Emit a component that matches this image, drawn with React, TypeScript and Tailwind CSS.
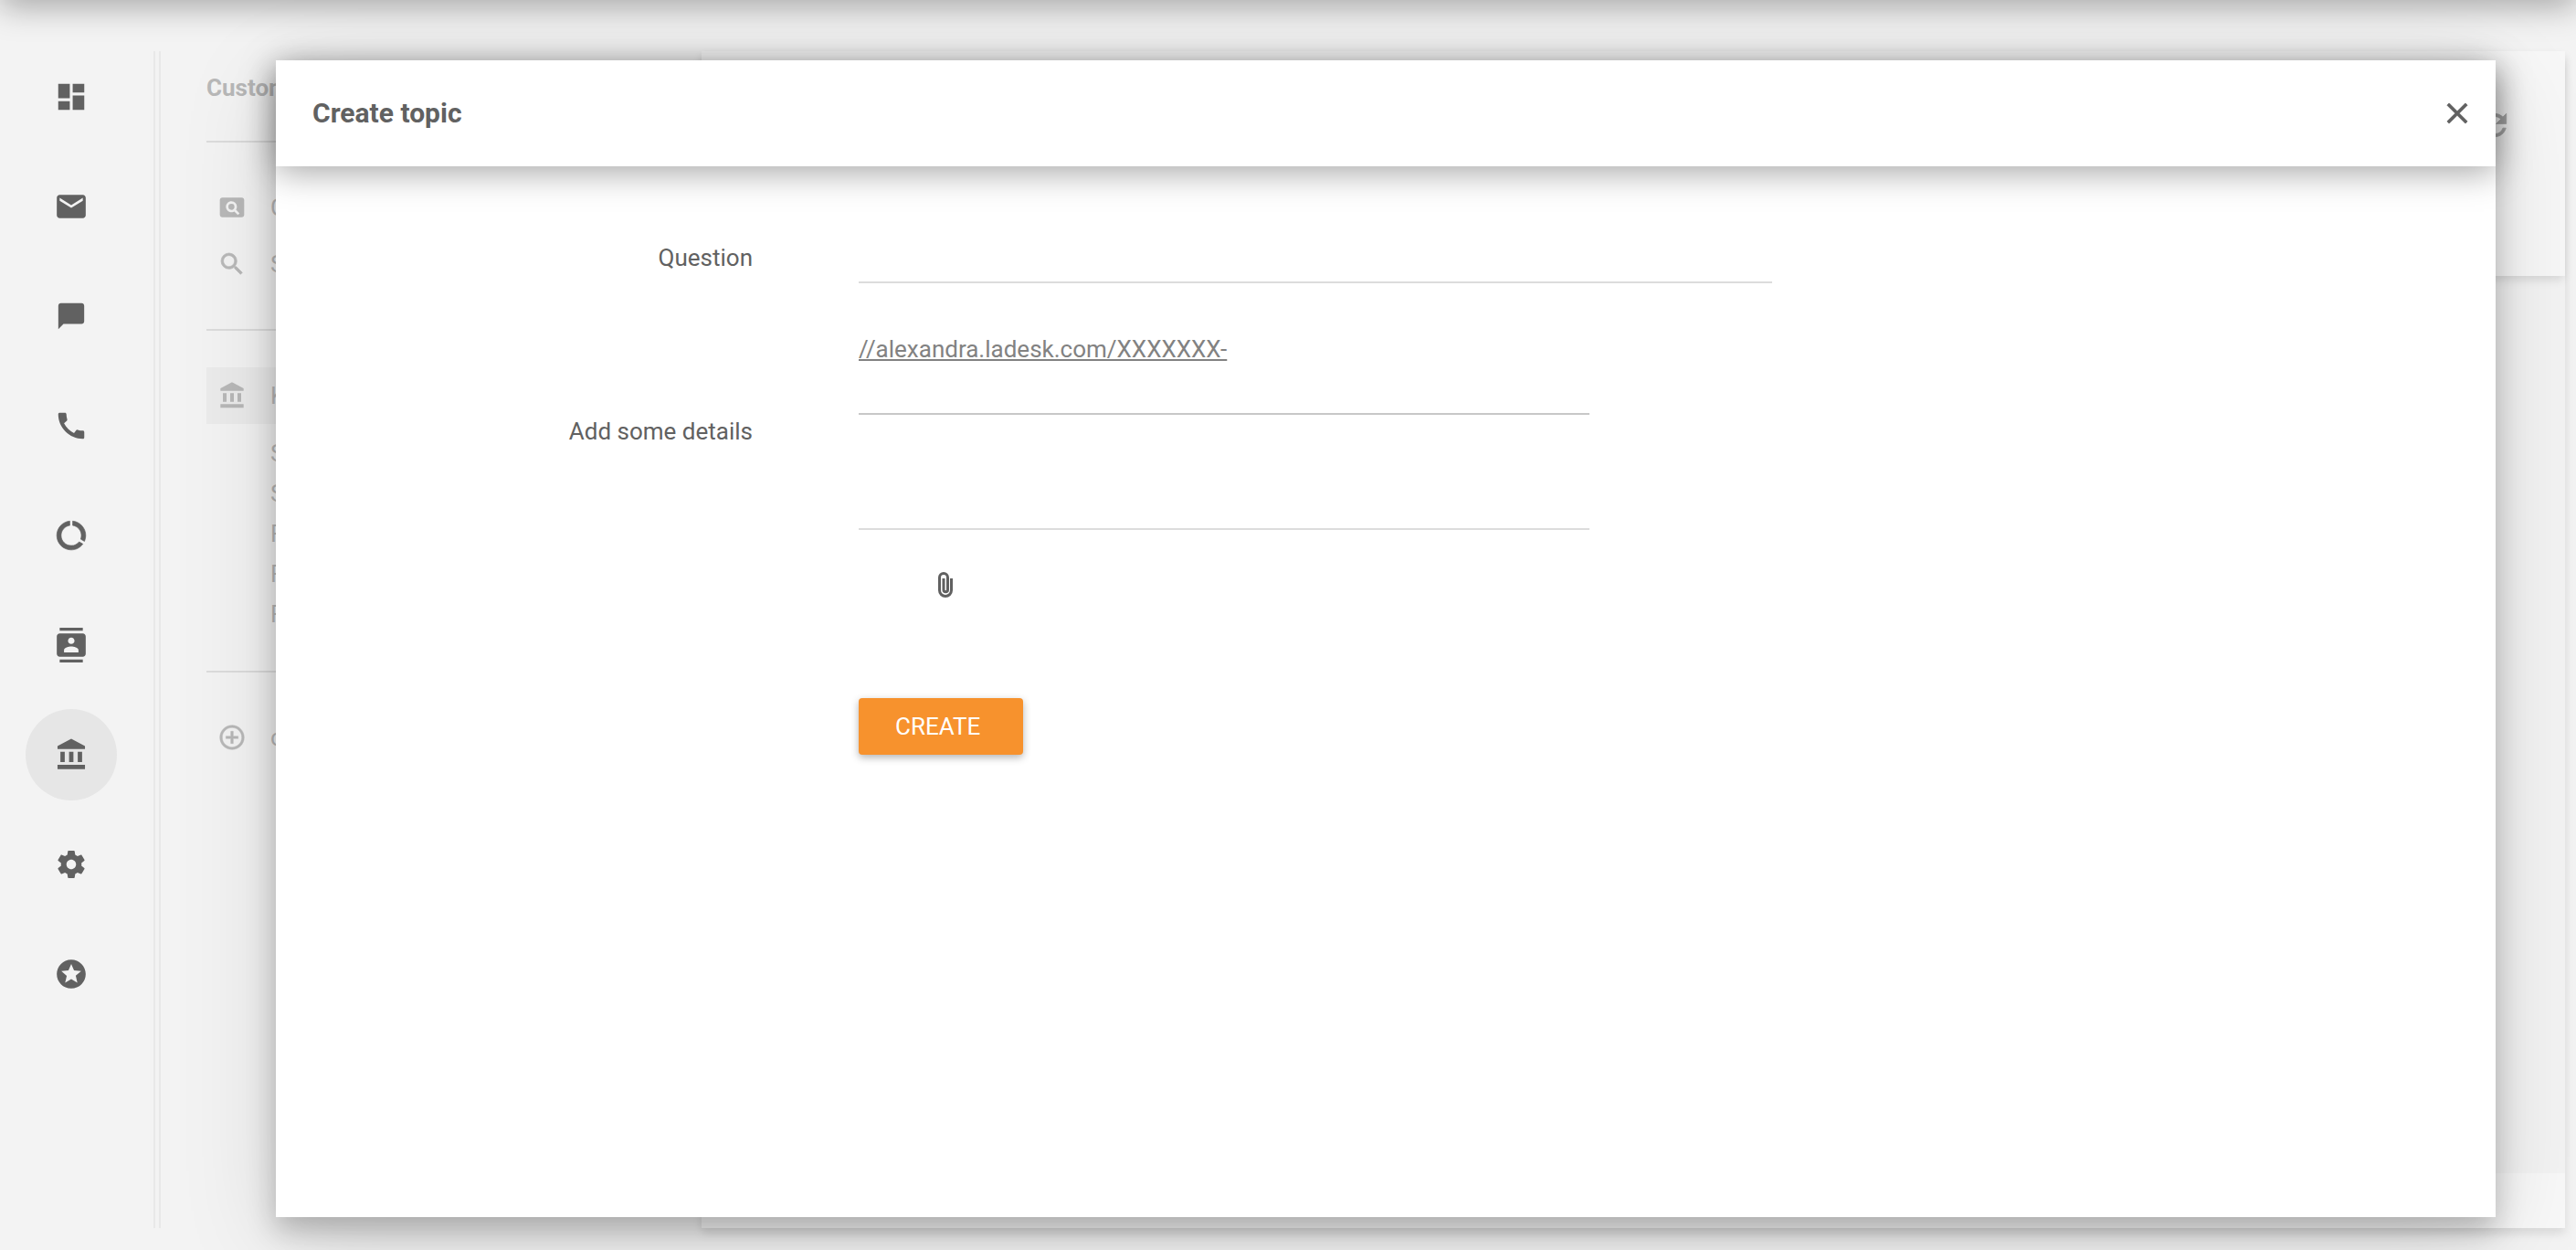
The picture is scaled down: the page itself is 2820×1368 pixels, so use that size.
import React from "react";
import {
  MdAddCircleOutline,
  MdCall,
  MdChatBubble,
  MdClose,
  MdContacts,
  MdDashboard,
  MdDataUsage,
  MdEmail,
  MdPageview,
  MdRefresh,
  MdSearch,
  MdStars,
} from "react-icons/md";

function BankIcon({ className }: { className?: string }) {
  return (
    <svg viewBox="-0.5 0 24 24" fill="currentColor" className={className} aria-hidden="true">
      <path d="M4 10v7h3v-7H4zm6 0v7h3v-7h-3zM2 22h19v-3H2v3zm14-12v7h3v-7h-3zm-4.5-9L2 6v2h19V6l-9.5-5z" />
    </svg>
  );
}

function GearIcon({ className }: { className?: string }) {
  return (
    <svg viewBox="0 0 24 24" fill="currentColor" className={className} aria-hidden="true">
      <path d="M19.43 12.98c.04-.32.07-.64.07-.98s-.03-.66-.07-.98l2.11-1.65c.19-.15.24-.42.12-.64l-2-3.46c-.12-.22-.39-.3-.61-.22l-2.49 1c-.52-.4-1.08-.73-1.69-.98l-.38-2.65C14.46 2.18 14.25 2 14 2h-4c-.25 0-.46.18-.49.42l-.38 2.65c-.61.25-1.17.59-1.69.98l-2.49-1c-.23-.09-.49 0-.61.22l-2 3.46c-.13.22-.07.49.12.64l2.11 1.65c-.04.32-.07.65-.07.98s.03.66.07.98l-2.11 1.65c-.19.15-.24.42-.12.64l2 3.46c.12.22.39.3.61.22l2.49-1c.52.4 1.08.73 1.69.98l.38 2.65c.03.24.24.42.49.42h4c.25 0 .46-.18.49-.42l.38-2.65c.61-.25 1.17-.59 1.69-.98l2.49 1c.23.09.49 0 .61-.22l2-3.46c.12-.22.07-.49-.12-.64l-2.11-1.65zM12 15.5c-1.93 0-3.5-1.57-3.5-3.5s1.57-3.5 3.5-3.5 3.5 1.57 3.5 3.5-1.57 3.5-3.5 3.5z" />
    </svg>
  );
}

function ClipIcon({ className }: { className?: string }) {
  return (
    <svg viewBox="0 0 16 28" fill="none" stroke="currentColor" strokeWidth="3" className={className} aria-hidden="true">
      <path d="M14.5 7v13a6.5 6.5 0 0 1-13 0V6a4.5 4.5 0 0 1 9 0v13.500a2 2 0 0 1-4.500 0V7" />
    </svg>
  );
}

const NAV = [
  { label: "Dashboard", icon: <MdDashboard className="size-[38px]" /> },
  { label: "Tickets", icon: <MdEmail className="size-[38px]" /> },
  { label: "Chats", icon: <MdChatBubble className="size-[34px]" /> },
  { label: "Calls", icon: <MdCall className="size-[38px]" /> },
  {
    label: "Reports",
    icon: <MdDataUsage className="size-[38px] stroke-current stroke-[0.4] [&>path[fill=none]]:stroke-none" />,
  },
  { label: "Contacts", icon: <MdContacts className="size-[38px]" /> },
  { label: "Portal", icon: <BankIcon className="size-[38px]" />, active: true },
  { label: "Configuration", icon: <GearIcon className="size-9" /> },
  { label: "Extras", icon: <MdStars className="size-[38px]" /> },
];

function MenuRow({ icon, text, active }: { icon: React.ReactNode; text: string; active?: boolean }) {
  return (
    <a
      href="#"
      className={active ? "flex h-[62px] items-center gap-[26px] bg-[#ebebeb] pl-3" : "flex h-[62px] items-center gap-[26px] pl-3"}
    >
      {icon}
      <span>{text}</span>
    </a>
  );
}

export default function App() {
  return (
    <div className="relative flex h-screen overflow-hidden bg-[#f3f3f3] font-[Roboto,sans-serif] text-[26px] leading-8 text-[#616161]">
      <nav className="mt-14 mb-6 flex w-[170px] shrink-0 flex-col items-start gap-5 border-r-2 border-[#e8e8e8] pl-7">
        {NAV.map((item) => (
          <button
            key={item.label}
            aria-label={item.label}
            className={
              item.active
                ? "flex size-[100px] items-center justify-center rounded-full bg-[#e6e6e6]"
                : "flex size-[100px] items-center justify-center rounded-full"
            }
          >
            {item.icon}
          </button>
        ))}
      </nav>

      <aside className="mt-14 mb-6 ml-1 w-[594px] shrink-0 border-l-2 border-[#e8e8e8] pl-[50px] text-[#b8b8b8]">
        <h2 className="flex h-[100px] items-start border-b-2 border-[#dcdcdc] pt-6 font-bold">Customer</h2>
        <div className="flex h-[206px] flex-col border-b-2 border-[#dcdcdc] pt-10">
          <MenuRow icon={<MdPageview className="size-8" />} text="C" />
          <MenuRow
            icon={<MdSearch className="size-8 stroke-current stroke-[0.5] [&>path[fill=none]]:stroke-none" />}
            text="S"
          />
        </div>
        <div className="h-[374px] border-b-2 border-[#dcdcdc] pt-10">
          <MenuRow icon={<BankIcon className="size-8" />} text="K" active />
          <ul className="flex flex-col pt-[10px] pl-[70px] leading-[44px]">
            <li>S</li>
            <li>S</li>
            <li>F</li>
            <li>F</li>
            <li>F</li>
          </ul>
        </div>
        <div className="pt-10">
          <MenuRow
            icon={<MdAddCircleOutline className="size-8 stroke-current stroke-[0.3] [&>path[fill=none]]:stroke-none" />}
            text="c"
          />
        </div>
      </aside>

      <main className="mt-14 mr-3 mb-6 flex flex-1 flex-col bg-[#f3f3f3] shadow-[0_6px_10px_rgba(0,0,0,0.1)]">
        <header className="flex h-[246px] items-start justify-end bg-[#f7f7f7] px-[58px] pt-[62px] shadow-[0_6px_10px_-2px_rgba(0,0,0,0.12)]">
          <button aria-label="Refresh" className="text-[#a8a8a8]">
            <MdRefresh className="size-[38px] stroke-current stroke-[0.5] [&>path[fill=none]]:stroke-none" />
          </button>
        </header>
        <div className="flex-1" />
        <footer className="h-[60px] bg-[#f8f8f8]" />
      </main>

      <div className="absolute inset-x-0 -top-10 h-10 shadow-[0_6px_36px_rgba(0,0,0,0.34)]" />

      <section
        role="dialog"
        aria-labelledby="dialog-title"
        className="absolute top-[66px] right-[88px] bottom-9 left-[302px] flex flex-col bg-white shadow-[0_14px_30px_rgba(0,0,0,0.24),0_24px_100px_rgba(0,0,0,0.13)]"
      >
        <header className="flex h-[116px] shrink-0 items-center justify-between bg-white pr-[23px] pl-10 shadow-[0_6px_36px_rgba(0,0,0,0.36)]">
          <h1 id="dialog-title" className="text-[30px] font-bold">
            Create topic
          </h1>
          <button aria-label="Close">
            <MdClose className="size-[38px] stroke-current stroke-[0.5] [&>path[fill=none]]:stroke-none" />
          </button>
        </header>
        <form className="grid grid-cols-[522px_1000px] gap-x-[116px] pt-[66px]">
          <label htmlFor="question" className="pt-[18px] text-right">
            Question
          </label>
          <input id="question" className="h-[62px] border-b-2 border-[#dcdcdc] outline-none" />

          <a
            href="#"
            className="col-start-2 mt-14 justify-self-start text-[#828282] underline decoration-2 underline-offset-2"
          >
            //alexandra.ladesk.com/XXXXXXX-
          </a>

          <label htmlFor="details" className="mt-[54px] pt-1 text-right">
            Add some details
          </label>
          <textarea
            id="details"
            className="mt-[54px] h-32 w-[800px] resize-none border-y-2 border-t-[#c8c8c8] border-b-[#dcdcdc] outline-none"
          />

          <button type="button" aria-label="Attach file" className="col-start-2 mt-[46px] ml-[87px] justify-self-start">
            <ClipIcon className="h-7 w-4" />
          </button>

          <button
            type="submit"
            className="col-start-2 mt-[110px] h-[62px] w-[180px] rounded bg-[#f7922d] pl-10 text-left text-white shadow-[0_3px_8px_rgba(0,0,0,0.3)]"
          >
            CREATE
          </button>
        </form>
      </section>
    </div>
  );
}
